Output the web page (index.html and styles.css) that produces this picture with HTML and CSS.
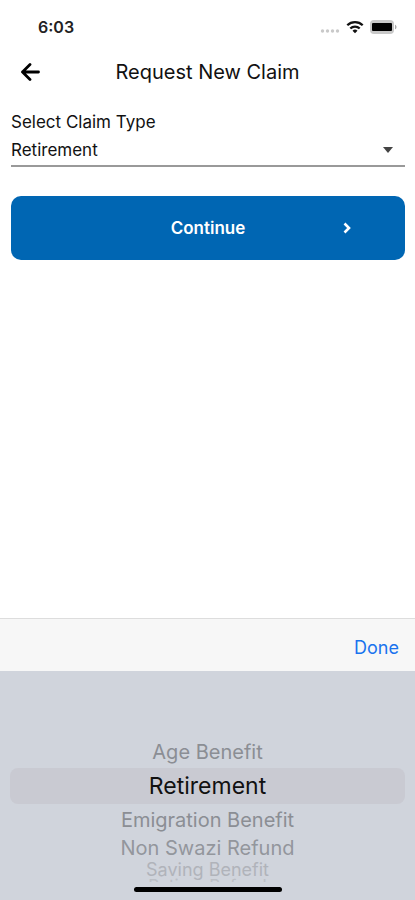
FILE: index.html
```html
<!DOCTYPE html>
<html lang="en">
<head>
<meta charset="utf-8">
<meta name="viewport" content="width=device-width, initial-scale=1">
<title>Request New Claim</title>
<link rel="stylesheet" href="styles.css">
</head>
<body>
<div class="status">
  <span class="time">6:03</span>
  <div class="indicators">
    <svg class="dots" viewBox="0 0 20 4" aria-hidden="true"><g fill="#c9c9c9"><circle cx="2.5" cy="2" r="1.7"/><circle cx="7.5" cy="2" r="1.7"/><circle cx="12.5" cy="2" r="1.7"/><circle cx="17.5" cy="2" r="1.7"/></g></svg>
    <svg class="wifi" viewBox="0 0 18 14" aria-hidden="true"><g fill="none" stroke="#111" stroke-width="2.3"><path d="M1.3 5.2a11 11 0 0 1 15.4 0"/><path d="M4.3 8.5a6.7 6.7 0 0 1 9.4 0"/></g><path d="M6.5 10.7a3.7 3.7 0 0 1 5 0L9 13.3z" fill="#111"/></svg>
    <svg class="battery" viewBox="0 0 27 14" aria-hidden="true"><rect width="24" height="14" rx="4" fill="#c8c8c8"/><path d="M25 4.7c2 .7 2 3.900 0 4.600z" fill="#aaa"/><rect x="2" y="3" width="20" height="8" rx="1" fill="#000"/></svg>
  </div>
</div>
<header class="bar">
  <button class="back" type="button" aria-label="Back"><svg viewBox="0 0 20 18" aria-hidden="true"><path d="M10 1.500 2.500 9l7.500 7.500M2.500 9H18.500" fill="none" stroke="#000" stroke-width="2.800" stroke-linecap="round" stroke-linejoin="round"/></svg></button>
  <h1>Request New Claim</h1>
</header>
<main>
  <label for="claim">Select Claim Type</label>
  <div class="field">
    <select id="claim">
      <option>Age Benefit</option>
      <option selected>Retirement</option>
      <option>Emigration Benefit</option>
      <option>Non Swazi Refund</option>
      <option>Saving Benefit</option>
    </select>
    <svg class="caret" viewBox="0 0 10 6" aria-hidden="true"><path d="M0 0h10L5 6z" fill="#444"/></svg>
  </div>
  <button class="continue" type="button">
    <span class="label">Continue</span>
    <svg viewBox="0 0 8 12" aria-hidden="true"><path d="M1.500 1.500 6 6l-4.500 4.500" fill="none" stroke="#fff" stroke-width="2.600"/></svg>
  </button>
</main>
<section class="sheet" aria-label="Claim type picker">
  <div class="toolbar"><button class="done" type="button">Done</button></div>
  <div class="wheel">
    <ul class="rows">
      <li class="near">Age Benefit</li>
      <li class="current">Retirement</li>
      <li class="near">Emigration Benefit</li>
      <li class="far">Non Swazi Refund</li>
      <li class="edge">Saving Benefit</li>
      <li class="last">Retiree Refund</li>
    </ul>
    <div class="home"></div>
  </div>
</section>
</body>
</html>
```
FILE: styles.css
```css
* { box-sizing: border-box; }
body {
  margin: 0;
  min-height: 100vh;
  display: flex;
  flex-direction: column;
  background: #fff;
  color: #111;
  font-family: Inter, "Liberation Sans", sans-serif;
}
button { border: 0; padding: 0; background: none; font: inherit; }
svg { display: block; }
.status {
  display: flex;
  justify-content: space-between;
  align-items: center;
  height: 54px;
  padding: 0 18px 0 38px;
}
.time { font-size: 16px; font-weight: 600; color: #222; }
.indicators { display: flex; align-items: center; gap: 6px; }
.dots { width: 20px; height: 4px; margin-top: 8px; }
.wifi { width: 18px; height: 14px; }
.battery { width: 27px; height: 14px; }
.bar {
  display: grid;
  grid-template-columns: 22px 1fr 22px;
  align-items: center;
  height: 36px;
  padding: 0 20px;
}
.back svg { width: 20px; height: 18px; }
h1 { margin: 0; font-size: 20px; line-height: 24px; font-weight: 400; text-align: center; }
main { flex: 1; padding: 20px 10px 0 11px; }
label { display: block; font-size: 17px; line-height: 24px; }
.field {
  display: flex;
  align-items: center;
  height: 33px;
  border-bottom: 2px solid #999;
  padding-right: 12px;
}
select {
  flex: 1;
  appearance: none;
  border: 0;
  padding: 0;
  background: none;
  color: inherit;
  font: inherit;
  font-size: 17px;
  line-height: 24px;
}
.caret { width: 10px; height: 6px; }
.continue {
  display: grid;
  grid-template-columns: 1fr auto 1fr;
  align-items: center;
  width: 100%;
  height: 64px;
  margin-top: 29px;
  border-radius: 10px;
  background: #0066b3;
  color: #fff;
  font-size: 17px;
  font-weight: 600;
}
.label { grid-column: 2; }
.continue svg { width: 8px; height: 12px; justify-self: end; margin-right: 54px; }
.toolbar {
  display: flex;
  justify-content: flex-end;
  align-items: center;
  height: 53px;
  padding: 5px 16px 0;
  border-top: 1px solid #ddd;
  background: #f7f7f7;
}
.done { color: #1a73ee; font-size: 18px; }
.wheel {
  padding: 65px 10px 8px;
  background: #d0d4dc;
}
.rows { list-style: none; margin: 0; padding: 0; text-align: center; }
.rows li { white-space: nowrap; }
.near { height: 32px; line-height: 32px; font-size: 20px; color: #8b8e94; }
.current { height: 36px; line-height: 36px; border-radius: 8px; background: #c9cad2; font-size: 23px; }
.far { height: 25px; line-height: 25px; font-size: 20px; color: #93969c; }
.edge { height: 17px; line-height: 17px; font-size: 18px; color: #b0b3ba; }
.last { height: 4px; line-height: 16px; font-size: 17px; color: #bcbfc6; overflow: hidden; }
.home { width: 148px; height: 5px; margin: 5px auto 0; border-radius: 3px; background: #000; }
```
